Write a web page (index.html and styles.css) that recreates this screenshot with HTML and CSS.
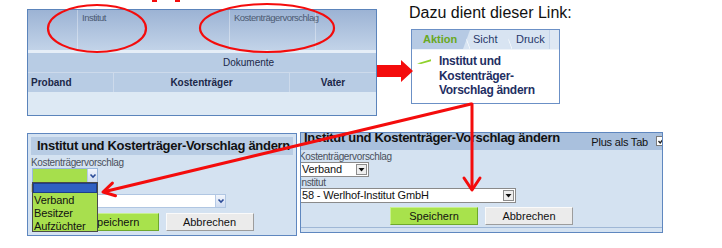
FILE: index.html
```html
<!DOCTYPE html>
<html lang="de">
<head>
    <meta charset="UTF-8">
    <meta name="viewport" content="width=device-width, initial-scale=1.0">
    <title>Institut und Kostenträger-Vorschlag ändern</title>
    <link rel="stylesheet" href="styles.css">
</head>
<body>
<div class="sheet">
    <div class="top-row">
        <!-- Ausschnitt aus der Probandenliste -->
        <div class="grid-panel">
            <div class="grid-head">
                <div class="head-col col-a"></div>
                <div class="head-col col-b">Institut</div>
                <div class="head-col col-c">Kostenträgervorschlag</div>
                <div class="head-col col-d"></div>
            </div>
            <div class="grid-strip"></div>
            <div class="grid-group">Dokumente</div>
            <div class="grid-cols">
                <div class="grid-col col-proband">Proband</div>
                <div class="grid-col col-kosten">Kostenträger</div>
                <div class="grid-col col-vater">Vater</div>
            </div>
            <div class="grid-body"></div>
        </div>

        <div class="hint">
            <div class="hint-caption">Dazu dient dieser Link:</div>
            <div class="menu-box">
                <div class="tabs">
                    <div class="tab tab-active">Aktion</div>
                    <div class="tab tab-slant tab-sicht">Sicht</div>
                    <div class="tab tab-slant tab-druck">Druck</div>
                </div>
                <div class="menu-link">
                    <svg class="menu-mark" width="14" height="5" viewBox="0 0 14 5">
                        <polygon points="0,4.5 14,0.3 14,2.3 4,5" fill="#8fd12c"/>
                    </svg>
                    <span>Institut und<br>Kostenträger-<br>Vorschlag ändern</span>
                </div>
            </div>
        </div>
    </div>

    <div class="bottom-row">
        <!-- Dialog mit geöffneter Auswahl -->
        <div class="dialog dialog-open">
            <div class="dialog-title">Institut und Kosterträger-Vorschlag ändern</div>
            <div class="field-label label-first">Kostenträgervorschlag</div>
            <div class="select select-green">
                <span class="select-value"></span>
                <span class="select-btn-soft">
                    <svg width="8" height="6" viewBox="0 0 8 6"><path d="M1.5 1.5 L4 4 L6.5 1.5" fill="none" stroke="#2c4c98" stroke-width="1.6"/></svg>
                </span>
            </div>
            <div class="field-label label-second">Institut</div>
            <div class="select select-white">
                <span class="select-value"></span>
                <span class="select-btn-soft">
                    <svg width="8" height="6" viewBox="0 0 8 6"><path d="M1.5 1.5 L4 4 L6.5 1.5" fill="none" stroke="#2c4c98" stroke-width="1.6"/></svg>
                </span>
            </div>
            <div class="button-row">
                <button class="btn btn-save">Speichern</button>
                <button class="btn btn-cancel">Abbrechen</button>
            </div>

            <div class="dropdown">
                <div class="dropdown-item is-selected"></div>
                <div class="dropdown-item">Verband</div>
                <div class="dropdown-item">Besitzer</div>
                <div class="dropdown-item">Aufzüchter</div>
            </div>
        </div>

        <!-- Dialog nach der Auswahl -->
        <div class="dialog dialog-done">
            <div class="dialog-head">
                <div class="dialog-head-title">Institut und Kostenträger-Vorschlag ändern</div>
                <div class="plus-tab">Plus als Tab</div>
                <div class="tab-check">
                    <svg width="8" height="8" viewBox="0 0 8 8"><path d="M1.5 4 L3.2 6 L6.5 1.5" fill="none" stroke="#222" stroke-width="1.3"/></svg>
                </div>
            </div>
            <div class="field-label label-done-first">Kostenträgervorschlag</div>
            <div class="select select-classic select-short">
                <span class="select-value">Verband</span>
                <span class="select-btn-hard">
                    <svg width="7" height="4" viewBox="0 0 7 4"><polygon points="0.5,0 6.5,0 3.5,3.5" fill="#111"/></svg>
                </span>
            </div>
            <div class="field-label label-done-second">Institut</div>
            <div class="select select-classic select-long">
                <span class="select-value">58 - Werlhof-Institut GmbH</span>
                <span class="select-btn-hard">
                    <svg width="7" height="4" viewBox="0 0 7 4"><polygon points="0.5,0 6.5,0 3.5,3.5" fill="#111"/></svg>
                </span>
            </div>
            <div class="button-row button-row-done">
                <button class="btn btn-save">Speichern</button>
                <button class="btn btn-cancel">Abbrechen</button>
            </div>
            <div class="dialog-foot"></div>
        </div>
    </div>

    <!-- rote Markierungen über den Ausschnitten -->
    <svg class="marks" width="722" height="248" viewBox="0 0 722 248">
        <g fill="none" stroke="#f40c0c" stroke-width="2.2">
            <ellipse cx="97" cy="28.5" rx="49" ry="23.5"/>
            <ellipse cx="267" cy="28" rx="67" ry="24"/>
        </g>
        <rect x="152" y="0" width="5" height="2" fill="#f40c0c"/>
        <rect x="175" y="0" width="5" height="2" fill="#f40c0c"/>
        <polygon fill="#f40c0c" points="377,65 401,65 401,60 413,71 401,82 401,77 377,77"/>
        <g stroke="#f40c0c" stroke-width="3" fill="none" stroke-linecap="round" stroke-linejoin="round">
            <line x1="471" y1="104" x2="105" y2="191.5"/>
            <polyline points="115.5,195.7 103,192 112.4,183.1"/>
            <line x1="472" y1="104" x2="472" y2="188"/>
            <polyline points="464,178 472,190 480,178"/>
        </g>
    </svg>
</div>
</body>
</html>
```

FILE: styles.css
```css
* {
    box-sizing: border-box;
}
body {
    margin: 0;
    background-color: #fff;
    font-family: "Liberation Sans", Arial, sans-serif;
    color: #111;
}
.sheet {
    position: relative;
    width: 722px;
    height: 248px;
    overflow: hidden;
}

/* obere Zeile */
.top-row {
    display: flex;
    align-items: flex-start;
    height: 132px;
    padding-left: 27px;
}
.grid-panel {
    display: flex;
    flex-direction: column;
    margin-top: 9px;
    width: 350px;
    height: 107px;
    border: 1px solid #5b84bb;
}
.grid-head {
    display: flex;
    height: 40px;
    background: linear-gradient(#9cb3d4, #c2d3e8);
}
.head-col {
    padding: 2px 0 0 4px;
    font-size: 9.5px;
    line-height: 12px;
    letter-spacing: -0.5px;
    color: #4c5a72;
    white-space: nowrap;
}
.head-col + .head-col {
    border-left: 1px solid rgba(255, 255, 255, 0.35);
}
.col-a { width: 49px; }
.col-b { width: 152px; }
.col-c { width: 86px; }
.col-d { flex: 1; }
.grid-strip {
    height: 3px;
    background-color: #e6eef7;
}
.grid-group {
    height: 19px;
    line-height: 19px;
    padding-left: 195px;
    background-color: #b8cce4;
    font-size: 10px;
    color: #1b2748;
}
.grid-cols {
    display: flex;
    height: 20px;
    border-top: 1px solid #cddaeb;
    background-color: #b8cce4;
}
.grid-col {
    line-height: 19px;
    font-size: 10px;
    font-weight: bold;
    color: #1b2748;
    text-align: center;
}
.col-proband {
    width: 85px;
    padding-left: 3px;
    text-align: left;
}
.col-kosten {
    width: 176px;
    border-left: 1px solid #cddaeb;
}
.col-vater {
    flex: 1;
    border-left: 1px solid #cddaeb;
}
.grid-body {
    flex: 1;
    background-color: #dde9f4;
}

/* Hinweis mit Menü */
.hint {
    margin-left: 32px;
}
.hint-caption {
    padding-top: 4px;
    margin-bottom: 7px;
    font-size: 16px;
    line-height: 18px;
    color: #111;
}
.menu-box {
    margin-left: 2px;
    width: 149px;
    height: 75px;
    border: 1px solid #6b90c6;
    background-color: #fff;
}
.tabs {
    display: flex;
    height: 20px;
    border-bottom: 1px solid #eef3f9;
    background-color: #dfe8f3;
}
.tab {
    height: 19px;
    line-height: 19px;
    font-size: 11px;
    color: #26386a;
}
.tab-active {
    width: 58px;
    padding-left: 11px;
    background-color: #b6cae4;
    color: #68a822;
    font-weight: bold;
}
.tab-slant {
    margin-left: -7px;
    clip-path: polygon(7px 0, 100% 0, 100% 100%, 0 100%);
    background:
        linear-gradient(to top right, transparent calc(50% - 0.8px), #f4f8fc 50%, transparent calc(50% + 0.8px)) no-repeat 0 0 / 7px 100%,
        #d8e4f2;
}
.tab-sicht {
    width: 49px;
    padding-left: 10px;
}
.tab-druck {
    width: 45px;
    padding-left: 11px;
    border-right: 1px solid #c4d4ea;
}
.menu-link {
    display: flex;
    align-items: flex-start;
    padding: 4px 0 0 5px;
    font-size: 12px;
    line-height: 14.5px;
    font-weight: bold;
    letter-spacing: -0.3px;
    color: #1f2f63;
}
.menu-mark {
    flex: none;
    margin: 5px 8px 0 0;
}

/* untere Zeile */
.bottom-row {
    display: flex;
    align-items: flex-start;
    gap: 3px;
    padding-left: 27px;
}
.dialog {
    position: relative;
    overflow: hidden;
    border: 1px solid #5f87bf;
    background-color: #d4e2f1;
}
.dialog-open {
    margin-top: 1px;
    width: 270px;
    height: 103px;
    padding: 3px 3px 0;
}
.dialog-done {
    width: 363px;
    height: 101px;
}
.dialog-title {
    height: 18px;
    line-height: 18px;
    padding-left: 6px;
    background-color: #b8cce4;
    font-size: 13px;
    font-weight: bold;
    letter-spacing: -0.3px;
    white-space: nowrap;
    overflow: hidden;
}
.field-label {
    font-size: 10px;
    line-height: 10px;
    letter-spacing: -0.35px;
    color: #4a505c;
    white-space: nowrap;
}
.label-first {
    margin-top: 3px;
}
.label-second {
    line-height: 11px;
}
.select {
    display: flex;
    align-items: stretch;
    font-size: 11px;
}
.select-value {
    flex: 1;
    white-space: nowrap;
    overflow: hidden;
}
.select-green {
    margin-left: 1px;
    width: 66px;
    height: 15px;
    border: 1px solid #9ab8dc;
    background-color: #a6df4c;
}
.select-white {
    margin-left: 1px;
    width: 194px;
    height: 14px;
    border: 1px solid #b0c6e2;
    background-color: #fff;
}
.select-btn-soft {
    display: flex;
    align-items: center;
    justify-content: center;
    width: 10px;
    border-left: 1px solid #b6cae6;
    background: linear-gradient(#f1f5fc, #cfdcf0);
}
.button-row {
    display: flex;
    justify-content: center;
    gap: 7px;
    margin-top: 5px;
}
.btn {
    width: 88px;
    height: 18px;
    padding: 0;
    border: 1px solid;
    font-family: "Liberation Sans", Arial, sans-serif;
    font-size: 11px;
    line-height: 16px;
    color: #111;
    text-align: center;
}
.btn-save {
    background-color: #a8e24c;
    border-color: #c8f090 #6ea82c #6ea82c #c8f090;
}
.btn-cancel {
    background-color: #ebebeb;
    border-color: #fafafa #9c9c9c #9c9c9c #fafafa;
}
.dropdown {
    position: absolute;
    left: 4px;
    top: 48px;
    width: 66px;
    height: 50px;
    border: 1px solid #4a4a4a;
    background-color: #a8df4e;
}
.dropdown-item {
    height: 13px;
    line-height: 13px;
    padding-left: 1px;
    font-size: 11px;
    letter-spacing: -0.1px;
    color: #111;
}
.dropdown-item.is-selected {
    height: 10px;
    margin-bottom: 1px;
    border: 1px solid #1d3f8a;
    background-color: #2f60c3;
}

/* zweiter Dialog */
.dialog-head {
    display: flex;
    align-items: flex-start;
    height: 17px;
    background-color: #a9c0dd;
    white-space: nowrap;
    overflow: hidden;
}
.dialog-head-title {
    padding-left: 3px;
    font-size: 13px;
    line-height: 10px;
    font-weight: bold;
    letter-spacing: -0.3px;
}
.plus-tab {
    margin: 4px 0 0 auto;
    font-size: 11px;
    line-height: 11px;
    letter-spacing: -0.2px;
}
.tab-check {
    display: flex;
    align-items: center;
    justify-content: center;
    flex: none;
    width: 10px;
    height: 10px;
    margin: 3px -4px 0 8px;
    border: 1px solid #7a7a7a;
    background-color: #fff;
}
.label-done-first {
    margin: 2px 0 0 -2px;
}
.label-done-second {
    margin-left: -2px;
    line-height: 11px;
}
.select-classic {
    height: 15px;
    padding: 1px 1px 1px 0;
    border: 1px solid #8a8a8a;
    border-left: none;
    background-color: #fff;
    line-height: 11px;
}
.select-classic .select-value {
    padding-left: 1px;
    letter-spacing: -0.15px;
}
.select-short {
    width: 68px;
}
.select-long {
    width: 215px;
}
.select-btn-hard {
    display: flex;
    align-items: center;
    justify-content: center;
    width: 11px;
    border: 1px solid #8c8c8c;
    background-color: #eeeeee;
}
.button-row-done {
    margin-top: 4px;
}
.dialog-foot {
    margin-top: 2px;
    border-top: 1px solid #9fb7d6;
}

.marks {
    position: absolute;
    top: 0;
    left: 0;
    pointer-events: none;
}
```
